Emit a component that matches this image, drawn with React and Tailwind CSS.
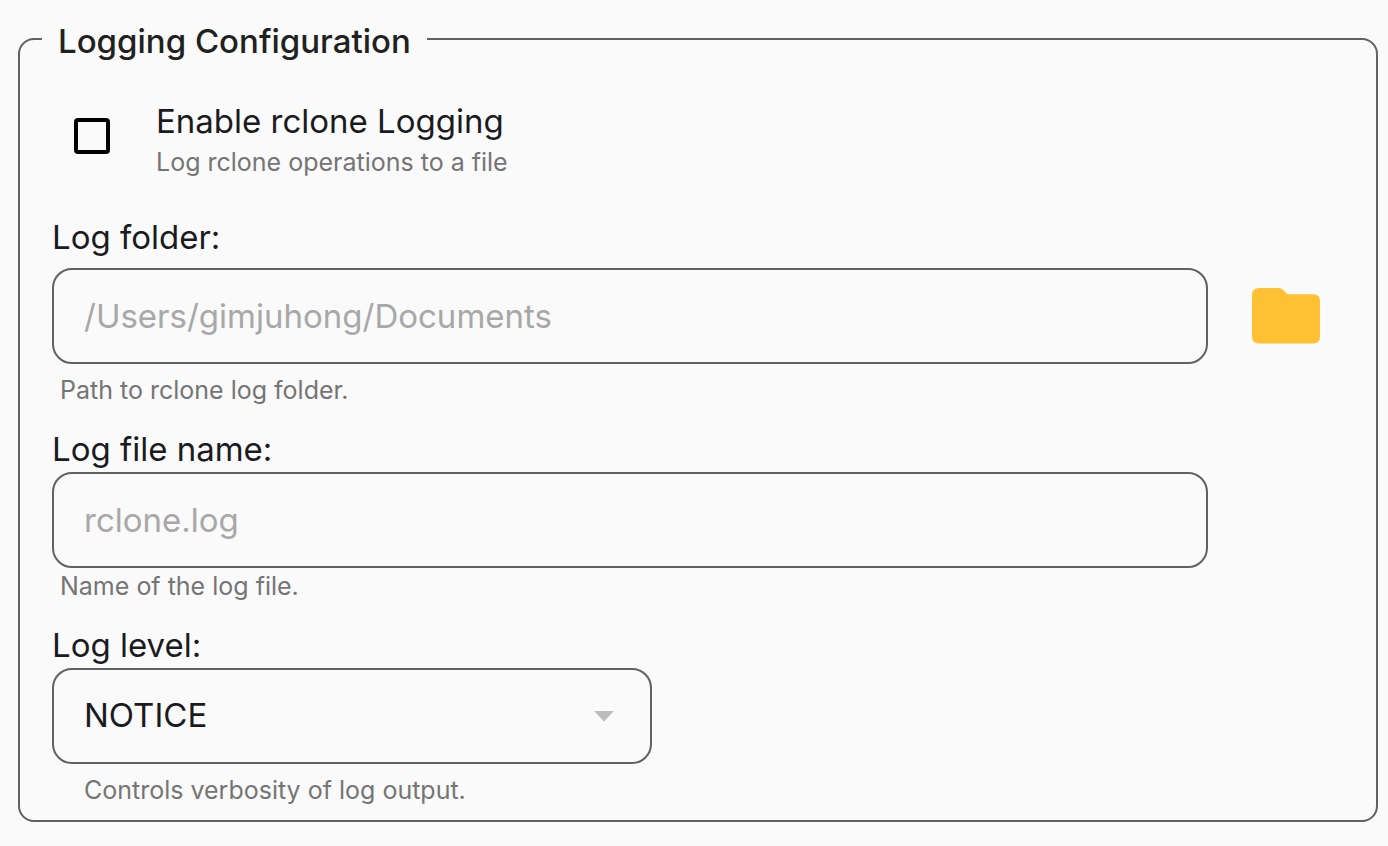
import { useState } from "react";

const fieldClass =
  "block h-24 w-full rounded-[20px] border-2 border-[#616161] bg-transparent px-[30px] text-[33px] text-[#1b1b1f] outline-none placeholder:text-[#a8a8a8] placeholder:opacity-100";
const labelClass = "block text-[33px] leading-[40px] text-[#1b1b1f]";
const hintClass = "text-[25px] leading-[32px] text-[#757575]";

function FolderIcon() {
  return (
    <svg viewBox="0 0 68 56" className="h-14 w-[68px]" fill="#ffc133" aria-hidden="true">
      <path d="M7 0H26.500Q29 0 31 1.800L35.500 6.200H61Q68 6.200 68 13V48.500Q68 55.500 61 55.500H7Q0 55.500 0 48.500V7Q0 0 7 0Z" />
    </svg>
  );
}

export default function App() {
  const [enabled, setEnabled] = useState(false);
  const [level, setLevel] = useState("NOTICE");

  return (
    <main className="min-h-screen bg-[#fafafa] pt-[17px] pr-[10px] pb-6 pl-[18px] font-['Inter',sans-serif]">
      <fieldset className="min-w-0 rounded-2xl border-2 border-[#616161] pr-[42px] pb-[14px] pl-8">
        <legend className="-ml-[10px] px-4 pt-1 text-[33px] leading-[40px] font-medium text-[#212121]">
          Logging Configuration
        </legend>

        <div className="flex items-start gap-[46px] pt-10 pl-[22px]">
          <input
            id="enable-logging"
            type="checkbox"
            checked={enabled}
            onChange={(e) => setEnabled(e.target.checked)}
            aria-describedby="enable-hint"
            className="mt-[17px] size-9 shrink-0 appearance-none rounded-[4px] border-4 border-black checked:bg-black"
          />
          <div className="flex flex-col gap-[5px]">
            <label htmlFor="enable-logging" className={labelClass}>
              Enable rclone Logging
            </label>
            <p id="enable-hint" className={hintClass}>
              Log rclone operations to a file
            </p>
          </div>
        </div>

        <div className="grid grid-cols-[minmax(0,1fr)_96px] gap-x-[30px] pt-[39px]">
          <label htmlFor="log-folder" className={`${labelClass} col-span-2 mb-[11px]`}>
            Log folder:
          </label>
          <input
            id="log-folder"
            type="text"
            placeholder="/Users/gimjuhong/Documents"
            aria-describedby="folder-hint"
            className={fieldClass}
          />
          <button
            type="button"
            aria-label="Choose log folder"
            className="flex h-24 w-24 items-center justify-center"
          >
            <FolderIcon />
          </button>
          <p id="folder-hint" className={`${hintClass} col-span-2 mt-[10px] pl-2`}>
            Path to rclone log folder.
          </p>

          <label htmlFor="log-file" className={`${labelClass} col-span-2 mt-[23px] mb-[3px]`}>
            Log file name:
          </label>
          <input
            id="log-file"
            type="text"
            placeholder="rclone.log"
            aria-describedby="file-hint"
            className={`${fieldClass} col-start-1`}
          />
          <p id="file-hint" className={`${hintClass} col-span-2 mt-[2px] pl-2`}>
            Name of the log file.
          </p>
        </div>

        <label htmlFor="log-level" className={`${labelClass} mt-[23px] mb-[3px]`}>
          Log level:
        </label>
        <div className="relative w-full max-w-[600px]">
          <select
            id="log-level"
            value={level}
            onChange={(e) => setLevel(e.target.value)}
            aria-describedby="level-hint"
            className={`${fieldClass} appearance-none`}
          >
            <option>DEBUG</option>
            <option>INFO</option>
            <option>NOTICE</option>
            <option>ERROR</option>
          </select>
          <div className="pointer-events-none absolute inset-y-0 right-[38px] flex items-center">
            <svg viewBox="0 0 20 12" className="h-3 w-5" fill="#bdbdbd" aria-hidden="true">
              <path d="M0 1H20L10 11.500Z" />
            </svg>
          </div>
        </div>
        <p id="level-hint" className={`${hintClass} mt-[10px] pl-8`}>
          Controls verbosity of log output.
        </p>
      </fieldset>
    </main>
  );
}
